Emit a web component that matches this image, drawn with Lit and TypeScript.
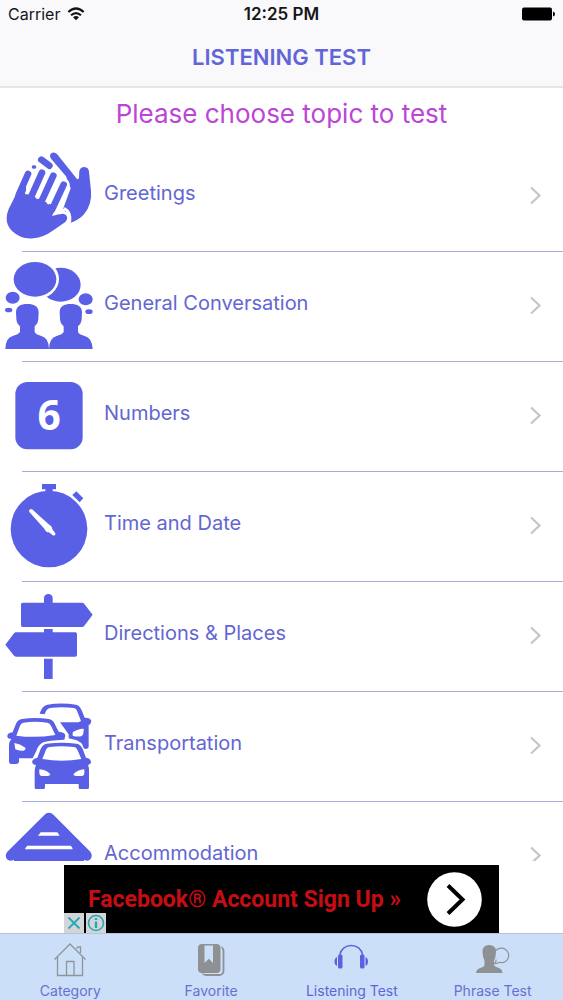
import { LitElement, html, svg, css, TemplateResult } from "lit";
import { customElement, state } from "lit/decorators.js";
import { classMap } from "lit/directives/class-map.js";

interface Topic {
  label: string;
  art: TemplateResult;
  box: string;
}

const ICON_BOX = "15 18 264 264";

// Front hand of the clapping pair; drawn once as a wide halo and once solid.
const frontHand = (color: string, halo: number) => svg`
  <g fill=${color} stroke=${color} stroke-linecap="round" stroke-linejoin="round">
    <path stroke-width=${halo} d="M76 92 L26 192 Q10 232 36 258 Q64 284 100 280 Q132 276 158 257 L196 231 Q206 220 198 210 Q190 202 156 213 L168 186 L148 176 L112 160 L79 146 Z"/>
    <path d="M84 87 L56 150" stroke-width=${20 + halo}/>
    <path d="M126 83 L94 154" stroke-width=${20 + halo}/>
    <path d="M160 92 L126 166" stroke-width=${20 + halo}/>
    <path d="M191 119 L156 194" stroke-width=${20 + halo}/>
    <path d="M188 217 L162 232" stroke-width=${20 + halo}/>
  </g>`;

const topics: Topic[] = [
  {
    label: "Greetings",
    box: ICON_BOX,
    art: svg`
      <path d="M152 26 Q162 18 171 27 L228 98 Q234 107 237 98 L238 78 Q241 66 253 66 Q266 67 267 80 L273 138 Q277 178 252 208 Q236 226 212 233 L190 190 L212 130 L198 94 L152 40 Q148 32 152 26Z"/>
      <path d="M124 44 L148 62" stroke="currentColor" stroke-width="20" stroke-linecap="round"/>
      <path d="M100 66 L104 66" stroke="currentColor" stroke-width="10" stroke-linecap="round"/>
      <path d="M192 190 Q214 202 209 232" fill="none" stroke="#fff" stroke-width="9"/>
      ${frontHand("#fff", 16)}
      ${frontHand("#5a60e5", 0)}
      <path d="M106 88 L79 144M144 88 L112 158M177 104 L145 174" stroke="#fff" stroke-width="8" stroke-linecap="round"/>`,
  },
  {
    label: "General Conversation",
    box: ICON_BOX,
    art: svg`
      <ellipse cx="182" cy="89" rx="60" ry="51"/>
      <ellipse cx="105" cy="72" rx="72" ry="61" fill="#fff"/>
      <path d="M118 126 L142 126 L136 140 L112 142Z" fill="#fff"/>
      <ellipse cx="105" cy="73" rx="64" ry="52"/>
      <ellipse cx="38" cy="128" rx="21" ry="18"/><ellipse cx="26" cy="165" rx="11" ry="7"/>
      <ellipse cx="257" cy="133" rx="21" ry="18"/><ellipse cx="267" cy="170" rx="11" ry="7"/>
      <path d="M82 147 C62 147 48 154 48 172 L49 192 Q50 206 60 214 L60 231 Q56 238 38 243 Q17 248 16 282 L147 282 Q146 248 124 243 Q106 238 104 231 L104 214 Q114 206 115 192 L116 172 C116 154 102 147 82 147Z"/>
      <path d="M212 147 C192 147 179 154 179 172 L180 192 Q181 206 191 214 L191 231 Q188 238 170 243 Q148 248 147 282 L278 282 Q276 248 254 243 Q236 238 234 231 L234 214 Q244 206 245 192 L246 172 C246 154 232 147 212 147Z"/>`,
  },
  {
    label: "Numbers",
    box: ICON_BOX,
    art: svg`
      <rect x="46" y="51" width="202" height="202" rx="36"/>
      <text class="digit" x="147" y="196" text-anchor="middle">6</text>`,
  },
  {
    label: "Time and Date",
    box: ICON_BOX,
    art: svg`
      <circle cx="147" cy="162" r="115"/>
      <path d="M126 27 H168 V43 H158 V54 H136 V43 H126Z"/>
      <path d="M229 49 L250 70 L239 82 L217 60Z"/>
      <path d="M89 104 Q93 100 98 104 L146 148 Q156 153 157 163 L166 175 Q168 184 158 181 L147 172 Q137 172 133 161 L88 111 Q85 107 89 104Z" fill="#fff"/>`,
  },
  {
    label: "Directions & Places",
    box: ICON_BOX,
    art: svg`
      <path d="M132 53 V38 Q134 27 145 27 Q156 27 158 38 V53 H246 Q250 53 253 57 L278 89 L253 122 Q250 126 246 126 H68 Q63 126 63 121 V58 Q63 53 68 53Z"/>
      <path d="M132 142 V132 H158 V142 H226 Q231 142 231 147 V210 Q231 215 226 215 H48 Q44 215 41 211 L16 179 L41 146 Q44 142 48 142Z"/>
      <path d="M132 221 H158 V279 Q158 284 153 284 H137 Q132 284 132 279Z"/>`,
  },
  {
    label: "Transportation",
    box: ICON_BOX,
    art: svg`
      <path fill-rule="evenodd" d="M119 56 Q126 32 142 29 Q185 22 228 29 Q240 32 246 48 L254 68 Q272 68 274 78 Q273 88 266 90 V154 Q266 162 256 162 Q250 162 249 154 Q248 144 230 136 L206 130 V118 L180 82 H235 L243 78 L230 45 Q228 40 222 39 Q184 34 150 39 Q142 40 138 48 L134 58Z
        M218 112 Q236 100 251 101 Q252 118 244 124 Q228 126 218 122Z"/>
      <path fill-rule="evenodd" d="M22 126 Q20 114 38 112 L48 86 Q54 74 66 72 Q106 66 146 72 Q158 74 164 86 L176 110 Q196 112 196 122 L193 134 Q144 136 130 142 Q116 148 110 166 L98 190 L57 190 V200 Q56 207 48 207 H34 Q27 207 27 200 V150 Q28 138 34 132 Q24 132 22 126Z
        M49 122 Q104 130 166 120 L153 92 Q150 84 142 83 Q105 78 70 83 Q63 84 60 92Z
        M43 144 Q60 146 76 158 Q78 164 70 167 Q56 168 46 163Z"/>
      <path fill-rule="evenodd" d="M97 204 Q94 192 112 188 L122 162 Q128 148 140 146 Q186 141 230 146 Q242 148 248 162 L258 188 Q273 190 273 202 Q272 208 264 210 Q268 218 267 230 V275 Q267 284 259 284 H244 Q236 284 236 275 V267 H135 V275 Q135 284 126 284 H112 Q104 284 104 275 V230 Q104 218 108 210 Q99 210 97 204Z
        M127 192 Q186 203 244 192 L232 164 Q229 157 222 156 Q184 152 149 156 Q141 157 138 164Z
        M118 223 Q140 224 151 238 Q150 243 143 243 H124 Q118 241 118 234Z
        M253 223 Q232 224 220 238 Q221 243 228 243 H247 Q253 241 253 234Z"/>`,
  },
  {
    label: "Accommodation",
    box: "15 33 264 264",
    art: svg`
      <path d="M147 38 Q155 38 161 45 L271 155 Q279 166 272 177 Q264 186 252 179 L42 179 Q30 186 21 178 Q13 166 22 155 L133 45 Q139 38 147 38Z"/>
      <path d="M42 176 H252 V297 H42Z"/>
      <path d="M122 97 H172 L179 107 H114Z M82 137 H212 Q218 142 218 148 H75 Q76 142 82 137Z" fill="#fff"/>`,
  },
];

const tabs = [
  {
    label: "Category",
    art: svg`<g fill="none" stroke="#8e9499" stroke-width="1.3">
      <path d="M1.500 17.500 L17 2 L32.500 17.500"/><path d="M4.500 15 V33.500 H29.500 V15"/>
      <path d="M13.500 33.500 V19.500 H21 V33.500"/><path d="M23.500 6.500 L25 5 H27.500 V11"/></g>`,
  },
  {
    label: "Favorite",
    art: svg`<rect x="8" y="5" width="21.500" height="28" rx="4" fill="none" stroke="#8e9194" stroke-width="1.800"/>
      <rect x="3.500" y="1.500" width="24" height="30" rx="4.500" fill="#cbe0f8"/>
      <rect x="4" y="2" width="22.500" height="29" rx="4" fill="#8e9194"/>
      <path d="M10.500 3.500 H19 V21 L14.800 16.800 L10.500 21Z" fill="#cbe0f8"/>`,
  },
  {
    label: "Listening Test",
    art: svg`<path d="M6 15 V12.500 A11.300 10 0 0 1 28.500 12.500 V15" fill="none" stroke="#5b62dc" stroke-width="1.500"/>
      <g fill="#5b62dc"><rect x="4" y="12.500" width="4.500" height="14" rx="1.500"/><rect x="26" y="12.500" width="4.500" height="14" rx="1.500"/>
      <path d="M3 15 V24 Q.5 23 .5 19.500 Q.5 16 3 15ZM31.500 15 V24 Q34 23 34 19.500 Q34 16 31.500 15Z"/></g>`,
  },
  {
    label: "Phrase Test",
    art: svg`<path d="M21 8.500 A7.300 7.300 0 1 1 24 20.300 Q22.500 21.800 19.500 21.500 Q21.500 20 21 17.500" fill="none" stroke="#8e9499" stroke-width="1.200"/>
      <path d="M14 3 Q21 3 21 9.500 Q21 15 19 18.500 V23 Q20 25 24 26 Q27.500 27.500 27.500 31 H1 Q1 27.500 5 26 Q9 25 9.500 23 V18.500 Q7.500 15 7.500 9.500 Q7.500 3 14 3Z" fill="#8e9194"/>`,
  },
];

@customElement("app-root")
export class AppRoot extends LitElement {
  @state() private active = "Listening Test";
  @state() private adOpen = true;

  static styles = css`
    :host {
      display: flex;
      flex-direction: column;
      height: 100vh;
      overflow: hidden;
      background: #fff;
      color: #6366d2;
      font-family: Inter, "Liberation Sans", sans-serif;
    }
    * { box-sizing: border-box; }
    button { border: 0; padding: 0; background: none; font: inherit; color: inherit; cursor: pointer; }
    svg { display: block; flex: none; }
    .top { background: #f9f8fb; border-bottom: 2px solid #e6e5e8; }
    .status {
      display: grid;
      grid-template-columns: 1fr auto 1fr;
      align-items: center;
      height: 28px;
      padding: 0 8px;
      font-size: 16px;
      color: #151517;
    }
    .carrier { display: flex; align-items: center; gap: 7px; }
    .clock { font-size: 17px; font-weight: 600; }
    .battery { justify-self: end; }
    .title {
      margin: 0;
      height: 58px;
      line-height: 58px;
      text-align: center;
      font-size: 22px;
      font-weight: 600;
      color: #6265d8;
    }
    .prompt {
      margin: 0;
      padding: 10px 0 12px;
      line-height: 32px;
      text-align: center;
      font-size: 26px;
      font-weight: 400;
      color: #bb46d6;
    }
    .list { flex: 1; min-height: 0; overflow: hidden; margin: 0; padding: 0; list-style: none; }
    .row {
      display: flex;
      align-items: center;
      gap: 11px;
      width: 100%;
      height: 109px;
      padding: 0 21px 3px 5px;
      text-align: left;
    }
    .rule { height: 1px; margin-left: 22px; background: #a9abd8; }
    .art { color: #5a60e5; fill: currentColor; }
    .digit { fill: #fff; font: 700 122px "Open Sans", "Noto Sans", sans-serif; }
    .name { flex: 1; padding-bottom: 4px; font-size: 20px; line-height: 16px; }
    .ad {
      position: relative;
      display: flex;
      align-items: center;
      width: 77.265%;
      height: 68px;
      margin: 4px auto 0;
      background: #000;
    }
    .link {
      flex: 1;
      display: flex;
      align-items: center;
      justify-content: space-between;
      padding: 0 17px 0 24px;
      font: 700 23px Roboto, sans-serif;
      color: #c70d14;
      text-decoration: none;
      white-space: nowrap;
    }
    .corner { position: absolute; left: 0; bottom: 0; display: flex; gap: 2px; }
    .mini { width: 20px; height: 20px; background: #d3d5d6; }
    .tabs {
      display: grid;
      grid-template-columns: repeat(4, 1fr);
      height: 67px;
      border-top: 1px solid #b4c4d6;
      background: #cbe0f8;
    }
    .tab {
      display: flex;
      flex-direction: column;
      align-items: center;
      gap: 5px;
      padding-top: 8px;
      font-size: 14px;
      line-height: 18px;
      color: #696fd0;
    }
    .current { color: #6065d6; }
  `;

  render() {
    return html`
      <header class="top">
        <div class="status">
          <span class="carrier">Carrier
            <svg width="18" height="14" viewBox="0 0 18 14" aria-hidden="true">
              <g fill="none" stroke="#151517" stroke-width="2.200"><path d="M1.300 5 Q9 -2 16.700 5"/><path d="M4 8.300 Q9 3.800 14 8.300"/></g>
              <path d="M6 10.300 Q9 7.500 12 10.300 L9 13.300Z" fill="#151517"/>
            </svg>
          </span>
          <span class="clock">12:25 PM</span>
          <svg class="battery" width="33" height="14" viewBox="0 0 33 14" role="img" aria-label="Battery full">
            <rect x="0" y="0.500" width="30" height="13" rx="2"/><path d="M31 4.500 Q33 5 33 7 Q33 9 31 9.500Z"/>
          </svg>
        </div>
        <h1 class="title">LISTENING TEST</h1>
      </header>
      <h2 class="prompt">Please choose topic to test</h2>
      <ul class="list">
        ${topics.map(
          (t) => html`<li>
            <button class="row">
              <svg class="art" width="88" height="88" viewBox=${t.box} aria-hidden="true">${t.art}</svg>
              <span class="name">${t.label}</span>
              <svg width="13" height="18" viewBox="0 0 13 18" aria-hidden="true">
                <path d="M2 1.500 L10.500 9.500 L2 17.500" fill="none" stroke="#c5c5ca" stroke-width="2.200"/>
              </svg>
            </button>
            <div class="rule"></div>
          </li>`
        )}
      </ul>
      ${this.adOpen
        ? html`<aside class="ad">
            <a class="link" href="#signup">
              Facebook® Account Sign Up »
              <svg width="55" height="55" viewBox="0 0 55 55" aria-hidden="true">
                <circle cx="27.500" cy="27.500" r="27.300" fill="#fff"/>
                <path d="M21 13.500 L35.500 27.500 L21 41.500" fill="none" stroke="#000" stroke-width="4"/>
              </svg>
            </a>
            <div class="corner">
              <button class="mini" aria-label="Close ad" @click=${() => (this.adOpen = false)}>
                <svg width="20" height="20" viewBox="0 0 20 20"><path d="M4.500 4.500 L15.500 15.500 M15.500 4.500 L4.500 15.500" stroke="#27a9ba" stroke-width="1.800"/></svg>
              </button>
              <button class="mini" aria-label="Ad information">
                <svg width="20" height="20" viewBox="0 0 20 20"><circle cx="10" cy="10" r="7.500" fill="none" stroke="#27a9ba" stroke-width="1.600"/><path d="M10 8.500 V15 M10 5 V7" stroke="#27a9ba" stroke-width="2.400"/></svg>
              </button>
            </div>
          </aside>`
        : ""}
      <nav class="tabs">
        ${tabs.map(
          (t) => html`<button
            class=${classMap({ tab: true, current: t.label === this.active })}
            @click=${() => (this.active = t.label)}
          >
            <svg width="35" height="35" viewBox="0 0 35 35" aria-hidden="true">${t.art}</svg>
            <span>${t.label}</span>
          </button>`
        )}
      </nav>
    `;
  }
}
